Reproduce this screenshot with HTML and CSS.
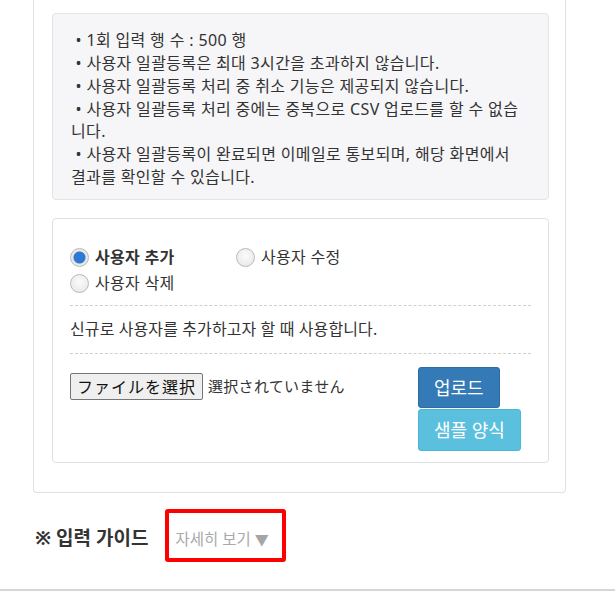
FILE: index.html
```html
<!DOCTYPE html>
<html lang="ko">
<head>
<meta charset="utf-8">
<title>사용자 일괄등록</title>
<link rel="stylesheet" href="styles.css">
</head>
<body>
<div class="panel">
  <div class="notice">
    <p>&nbsp;• 1회 입력 행 수 : 500 행</p>
    <p>&nbsp;• 사용자 일괄등록은 최대 3시간을 초과하지 않습니다.</p>
    <p>&nbsp;• 사용자 일괄등록 처리 중 취소 기능은 제공되지 않습니다.</p>
    <p>&nbsp;• 사용자 일괄등록 처리 중에는 중복으로 CSV 업로드를 할 수 없습니다.</p>
    <p>&nbsp;• 사용자 일괄등록이 완료되면 이메일로 통보되며, 해당 화면에서 결과를 확인할 수 있습니다.</p>
  </div>

  <div class="upload-box">
    <div class="radios">
      <label class="radio checked"><input type="radio" name="mode" checked><span>사용자 추가</span></label>
      <label class="radio"><input type="radio" name="mode"><span>사용자 수정</span></label>
      <label class="radio"><input type="radio" name="mode"><span>사용자 삭제</span></label>
    </div>
    <hr class="dashed">
    <p class="desc">신규로 사용자를 추가하고자 할 때 사용합니다.</p>
    <hr class="dashed">
    <div class="file-row">
      <label class="file">
        <input type="file" class="file-input">
        <span class="file-btn">ファイルを選択</span>
        <span class="file-name">選択されていません</span>
      </label>
      <div class="actions">
        <button class="btn btn-primary">업로드</button>
        <button class="btn btn-info">샘플 양식</button>
      </div>
    </div>
  </div>
</div>

<div class="guide">
  <h3 class="guide-title">※ 입력 가이드</h3>
  <button class="guide-toggle">자세히 보기 <span class="caret">▼</span></button>
</div>
<div class="footer-line"></div>
</body>
</html>
```

FILE: styles.css
```css
* { box-sizing: border-box; }

body {
  margin: 0;
  font-family: "Noto Sans", "Noto Sans CJK KR", sans-serif;
  font-size: 16px;
  line-height: 22.86px;
  color: #333;
  background: #fff;
}

.panel {
  margin-left: 33px;
  width: 533px;
  border: 1px solid #dfdfe4;
  border-top: none;
  border-radius: 0 0 4px 4px;
  padding: 13px 16px 29px 18px;
}

.notice {
  background: #f6f6f8;
  border: 1px solid #e3e3e8;
  border-radius: 4px;
  padding: 15px 20px 10px 18px;
  letter-spacing: 0.35px;
}

.notice p {
  margin: 0;
}

.upload-box {
  margin-top: 18px;
  border: 1px solid #e0e0e5;
  border-radius: 4px;
  padding: 25px 17px 11px;
}

.radios {
  display: flex;
  flex-wrap: wrap;
  letter-spacing: 0.3px;
}

.radio {
  display: flex;
  align-items: center;
  width: 166px;
  height: 26px;
  cursor: pointer;
}

.radio input {
  appearance: none;
  -webkit-appearance: none;
  width: 19px;
  height: 19px;
  margin: 0 6px 0 0;
  border-radius: 50%;
  border: 1px solid #b9b9b9;
  background: radial-gradient(circle at 50% 40%, #fbfbfb 0, #e4e4e4 100%);
  flex: none;
}

.radio input:checked {
  background: radial-gradient(circle, #2d79d3 0, #2d79d3 5.5px, #e8e8e8 6.5px, #e8e8e8 100%);
}

.radio.checked span {
  font-weight: bold;
}

.dashed {
  border: none;
  border-top: 1px dashed #cfcfcf;
  margin: 9px 0 0;
  height: 0;
}

.desc {
  margin: 12px 0 12px;
  letter-spacing: 0.1px;
}

.file-row {
  display: grid;
  grid-template-columns: 348px auto;
  margin-top: 13px;
}

.file {
  display: flex;
  align-items: center;
  align-self: start;
  margin-top: 6px;
  cursor: pointer;
}

.file-input {
  display: none;
}

.file-btn {
  display: inline-block;
  height: 27px;
  width: 133px;
  line-height: 25px;
  padding: 0 5px;
  text-align: center;
  background: #efefef;
  border: 1px solid #767676;
  border-radius: 2px;
  font-family: "Noto Sans CJK JP", sans-serif;
  font-size: 16px;
  letter-spacing: 1px;
  color: #111;
  white-space: nowrap;
}

.file-name {
  margin-left: 5px;
  font-family: "Noto Sans CJK JP", sans-serif;
  font-size: 15px;
  letter-spacing: 0.3px;
  color: #333;
  white-space: nowrap;
}

.actions {
  display: flex;
  flex-direction: column;
  align-items: flex-start;
  gap: 1px;
}

.btn {
  font-family: "Noto Sans", "Noto Sans CJK KR", sans-serif;
  font-size: 18px;
  line-height: 24px;
  color: #fff;
  border: 1px solid transparent;
  border-radius: 3px;
  padding: 8px 15px;
  margin: 0;
  cursor: pointer;
}

.btn-primary {
  background: #337ab7;
  border-color: #2e6da4;
  height: 41px;
}

.btn-info {
  background: #5bc0de;
  border-color: #46b8da;
  height: 42px;
}

.guide {
  display: flex;
  align-items: center;
  margin: 16px 0 0 35px;
}

.guide-title {
  margin: 0 17px 0 0;
  font-size: 19px;
  font-weight: bold;
  color: #333;
  padding-top: 6px;
}

.guide-toggle {
  background: #fff;
  border: 4px solid #f00;
  border-radius: 3px;
  width: 121px;
  height: 53px;
  padding: 7px 0 0 6px;
  text-align: left;
  font-family: "Noto Sans", "Noto Sans CJK KR", sans-serif;
  font-size: 15.5px;
  color: #aaa;
  cursor: pointer;
}

.caret {
  font-size: 14px;
  color: #a5a5a5;
}

.footer-line {
  margin-top: 27px;
  border-top: 2px solid #d6d6d6;
}
```
